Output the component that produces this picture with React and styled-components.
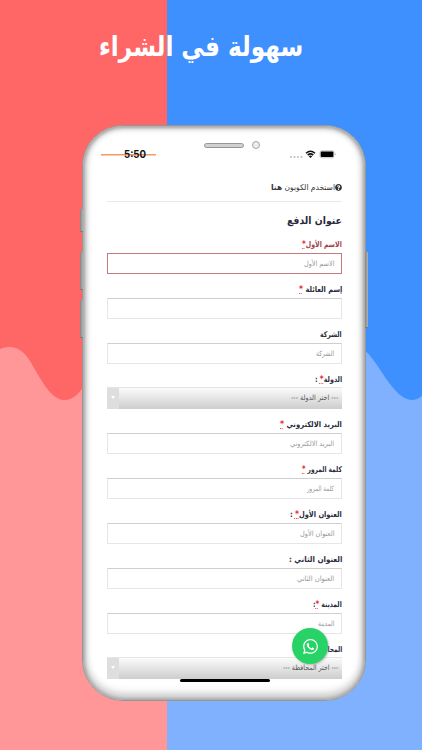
import React, { useLayoutEffect, useRef, useState } from "react";
import styled, { createGlobalStyle } from "styled-components";
import { FaWhatsapp, FaQuestionCircle } from "react-icons/fa";

const GlobalStyle = createGlobalStyle`
  * { box-sizing: border-box; }
  body { margin: 0; font-family: "DejaVu Sans", "Noto Sans", sans-serif; overflow: hidden; }
`;

const Poster = styled.main`
  position: relative;
  width: 422px;
  height: 750px;
  overflow: hidden;
  background: linear-gradient(90deg, #ff6767 167px, #3f90ff 167px);
  display: flex;
  flex-direction: column;
  align-items: center;
`;

const Waves = styled.svg`
  position: absolute;
  inset: 0;
`;

const Title = styled.h1`
  position: relative;
  margin: 0;
  height: 125px;
  width: 100%;
  padding: 29px 119px 0 0;
  font-size: 28px;
  line-height: 36px;
  font-weight: 700;
  color: #fff;
  direction: rtl;
`;

const Phone = styled.section`
  position: relative;
  width: 284px;
  height: 576px;
  margin-left: 26px;
  border-radius: 41px;
  background: #fff;
  border: 1px solid #969696;
  box-shadow: inset 0 0 3px 2px #a8a8a8, inset 0 0 5px 4px #dcdcdc, inset 0 -5px 10px 0 #b8b8b8;
  padding: 15px 23px 0 24px;
  display: flex;
  flex-direction: column;
`;

const SideButton = styled.i`
  position: absolute;
  ${(p) => p.$side}: -3px;
  top: ${(p) => p.$top}px;
  width: 3px;
  height: ${(p) => p.$height}px;
  border-radius: 1px;
  background: linear-gradient(90deg, #858585, #b6b0b0);
  border-bottom: 1px solid #777;
`;

const SpeakerRow = styled.div`
  display: flex;
  align-items: center;
  height: 8px;
  padding-left: 97px;
  gap: 8px;
`;

const Speaker = styled.span`
  width: 40px;
  height: 5px;
  border: 1px solid #969696;
  border-radius: 3px;
  background: #d0d0d0;
`;

const Camera = styled.span`
  width: 8px;
  height: 8px;
  border: 1.5px solid #a4a4a4;
  border-radius: 50%;
  background: #eee;
`;

const StatusBar = styled.div`
  display: flex;
  align-items: center;
  height: 12px;
  margin: 0 -1px 0 -6px;
`;

const Clock = styled.div`
  width: 55px;
  height: 12px;
  padding-left: 21px;
  font: 700 10.5px/12px Inter, sans-serif;
  color: #111;
  background: linear-gradient(#f29a68, #f29a68) 0 5px / 55px 1.5px no-repeat;
`;

const StatusIcons = styled.svg`
  margin-left: auto;
`;

const Coupon = styled.div`
  display: flex;
  align-items: center;
  direction: rtl;
  height: 34px;
  margin-top: 6px;
  padding-top: 14px;
  padding-bottom: 7px;
  font-size: 8px;
  color: #333;
`;

const Divider = styled.hr`
  width: 100%;
  height: 1px;
  margin: 0;
  border: 0;
  background: #e8e8e8;
`;

const Heading = styled.h2`
  margin: 0;
  height: 35px;
  padding-top: 9px;
  font-size: 10.5px;
  line-height: 18px;
  color: #292b3c;
  direction: rtl;
`;

const Form = styled.form`
  display: flex;
  flex-direction: column;
  direction: rtl;
`;

const Field = styled.div`
  display: flex;
  flex-direction: column;
  height: 45px;
`;

const Label = styled.label`
  height: 16px;
  line-height: 16px;
  font-size: 7.8px;
  font-weight: 700;
  color: ${(p) => (p.$error ? "#a33c43" : "#292b3c")};
`;

const Required = styled.abbr`
  color: #ee2835;
  font-size: 9px;
  line-height: 8px;
  text-decoration: underline dotted 0.7px #ee2835;
`;

const Input = styled.div`
  height: 21px;
  padding: 0 7px;
  border: 1px solid ${(p) => (p.$error ? "#c5797d" : "#e6e6e6")};
  ${(p) => !p.$error && "border-top-color: #cfcfcf;"}
  background: #fff;
  line-height: 20px;
  font-size: 7.3px;
  color: #999;
`;

const Select = styled.div`
  display: flex;
  justify-content: space-between;
  height: 22px;
  margin-top: -1px;
  padding-right: 4px;
  border: 0 solid #cfcfcf;
  border-bottom-width: 1px;
  border-top: 1px solid #e5e5e5;
  background: linear-gradient(#fbfbfb, #cfcfcf);
  line-height: 20px;
  font-size: 7.3px;
  color: #555;
`;

const Arrow = styled.span`
  width: 12px;
  height: 21px;
  display: flex;
  align-items: center;
  justify-content: center;
  background: #dedede;
  &::before {
    content: "";
    border: 2px solid transparent;
    border-top: 3px solid #fff;
    border-bottom: 0;
    margin-top: -3px;
  }
`;

const TextRun = styled.span`
  display: inline-block;
  white-space: pre;
  transform-origin: 100% 50%;
`;

const WhatsApp = styled.button`
  position: absolute;
  left: 209px;
  top: 502px;
  width: 36px;
  height: 36px;
  padding: 0;
  border: 0;
  border-radius: 50%;
  display: flex;
  align-items: center;
  justify-content: center;
  background: #27d366;
  color: #fff;
  box-shadow: 1px 1px 2px #8888;
`;

const HomeBar = styled.span`
  position: absolute;
  left: 97px;
  top: 553px;
  width: 90px;
  height: 3px;
  border-radius: 2px;
  background: #000;
`;

// Condenses or widens a run of text to the given column width.
function Fit({ width, children }) {
  const ref = useRef(null);
  const [scale, setScale] = useState(1);
  useLayoutEffect(() => {
    setScale(width / ref.current.offsetWidth);
  }, [width]);
  return (
    <TextRun ref={ref} style={{ transform: `scaleX(${scale})` }}>
      {children}
    </TextRun>
  );
}

const star = <Required>*</Required>;

const fields = [
  { label: <>الاسم الأول{star}</>, lw: 40, hint: "الاسم الأول", hw: 31, error: true },
  { label: <>إسم العائلة {star}</>, lw: 43 },
  { label: "الشركة", lw: 22, hint: "الشركة", hw: 18 },
  { label: <>الدولة{star} :</>, lw: 27, hint: "--- اختر الدولة ---", hw: 47, select: true },
  { label: <>البريد الالكتروني {star}</>, lw: 62, hint: "البريد الالكتروني", hw: 44 },
  { label: <>كلمة المرور {star}</>, lw: 40, hint: "كلمة المرور", hw: 27 },
  { label: <>العنوان الأول{star} :</>, lw: 52, hint: "العنوان الأول", hw: 34 },
  { label: "العنوان الثاني :", lw: 53, hint: "العنوان الثاني", hw: 37 },
  { label: <>المدينة {star}:</>, lw: 29, hint: "المدينة", hw: 16 },
  { label: <>المحافظة {star}:</>, lw: 36, hint: "--- اختر المحافظة ---", hw: 55, select: true },
];

export default function App() {
  return (
    <Poster>
      <GlobalStyle />
      <Waves width="422" height="750">
        <path d="M0 349C14 344 22 349 30 361C40 378 51 400 64 400C75 400 80 392 90 378H167V750H0Z" fill="#ff9798" />
        <path d="M167 350H364C379 361 393 400 412 400Q417 400 422 396V750H167Z" fill="#7fb1ff" />
      </Waves>
      <Title><Fit width={204}>سهولة في الشراء</Fit></Title>
      <Phone>
        <SideButton $side="left" $top={83} $height={23} />
        <SideButton $side="left" $top={126} $height={38} />
        <SideButton $side="left" $top={174} $height={38} />
        <SideButton $side="right" $top={126} $height={76} />
        <SpeakerRow><Speaker /><Camera /></SpeakerRow>
        <StatusBar>
          <Clock><Fit width={22}>5:50</Fit></Clock>
          <StatusIcons width="54" height="12" viewBox="0 0 54 12">
            <g fill="#bbb">
              <circle cx="2" cy="8" r="1" /><circle cx="5.5" cy="8" r="1" />
              <circle cx="9" cy="8" r="1" /><circle cx="12.5" cy="8" r="1" />
            </g>
            <g fill="none" stroke="#111" strokeWidth="1.5">
              <path d="M17 4.2Q21.5 0.2 26 4.2M18.7 6.1Q21.5 3.7 24.3 6.1" />
            </g>
            <path d="M19.8 7.2Q21.5 6 23.2 7.2L21.5 9Z" fill="#111" />
            <rect x="31" y="1.8" width="14" height="7" rx="1.8" fill="#fff" stroke="#aaa" strokeWidth=".7" />
            <rect x="31.7" y="2.5" width="12.7" height="5.6" rx="1" fill="#000" />
            <path d="M46 4q1.2 1.2 0 2.5" fill="#999" />
          </StatusIcons>
        </StatusBar>
        <Coupon><FaQuestionCircle size={7} /><Fit width={64}>استخدم الكوبون <b>هنا</b></Fit></Coupon>
        <Divider />
        <Heading><Fit width={55}>عنوان الدفع</Fit></Heading>
        <Form>
          {fields.map((f, i) => (
            <Field key={i}>
              <Label $error={f.error}><Fit width={f.lw}>{f.label}</Fit></Label>
              {f.select ? (
                <Select><Fit width={f.hw}>{f.hint}</Fit><Arrow /></Select>
              ) : (
                <Input $error={f.error}>{f.hint && <Fit width={f.hw}>{f.hint}</Fit>}</Input>
              )}
            </Field>
          ))}
        </Form>
        <WhatsApp aria-label="WhatsApp"><FaWhatsapp size={17} /></WhatsApp>
        <HomeBar />
      </Phone>
    </Poster>
  );
}
